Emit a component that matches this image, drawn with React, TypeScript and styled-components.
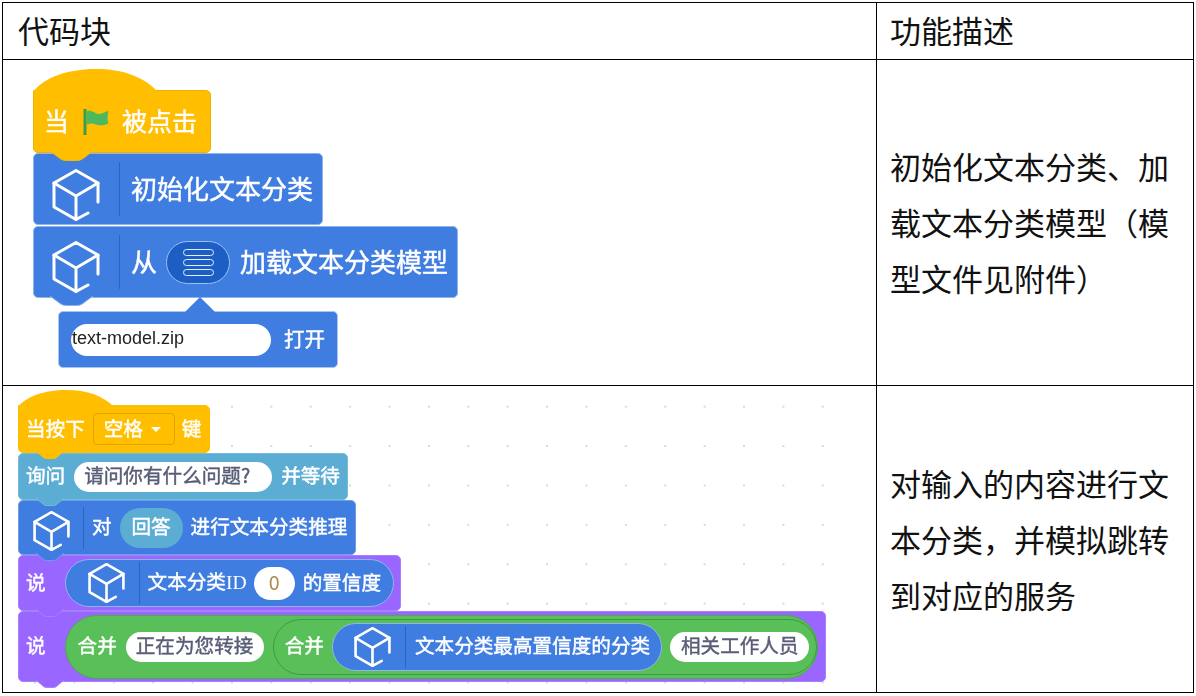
import React from 'react'
import styled, { createGlobalStyle } from 'styled-components'

const BLUE = '#3f7de0'
const TEAL = '#5cadd3'
const YELLOW = '#ffbf00'
const PURPLE = '#9966ff'
const GREEN = '#59c059'
const CJK = '"Noto Sans CJK SC", "Noto Sans", sans-serif'

const Global = createGlobalStyle`
  html, body { margin: 0; padding: 0; background: #fff; }
  body { font-family: ${CJK}; }
`

const Table = styled.div`
  margin: 2px;
  display: grid;
  grid-template-columns: 873px 316px;
  grid-template-rows: 56px 325px 306px;
  gap: 1px;
  padding: 1px;
  box-sizing: border-box;
  width: 1192px;
  height: 691px;
  background: #000;
`

const HeadCell = styled.div`
  background: #fff;
  display: flex;
  align-items: center;
  padding: 0 0 4px ${p => p.$pl || 13}px;
  font-size: 31px;
  color: #111;
`

const TextCell = styled.div`
  background: #fff;
  display: flex;
  align-items: center;
  padding: 0 18px 1px 13px;
  font-size: 31px;
  line-height: 56px;
  color: #111;
`

const CodeCell = styled.div`
  background: #fff;
  overflow: hidden;
`

const Stack = styled.div`
  display: flex;
  flex-direction: column;
  align-items: flex-start;
  padding: 30px 0 0 30px;
  filter: blur(0.35px);
`

const Canvas = styled(Stack)`
  width: 823px;
  height: 100%;
  box-sizing: border-box;
  padding: 19px 0 0 15px;
  background-image: radial-gradient(circle, #d8d8d8 1px, transparent 1.5px);
  background-size: 39.4px 39.4px;
  background-position: 12.3px 1px;
`

const Block = styled.div`
  position: relative;
  display: flex;
  align-items: center;
  box-sizing: border-box;
  flex: none;
  width: ${p => p.$w}px;
  height: ${p => p.$h}px;
  margin-top: ${p => p.$mt || 0}px;
  margin-left: ${p => p.$ml || 0}px;
  padding-left: ${p => p.$pl || 0}px;
  background: ${p => p.$bg};
  border: 1px solid ${p => p.$line};
  border-radius: ${p => (p.$hat ? '0 5px 5px 5px' : '5px')};
  color: #fff;
  font-size: ${p => p.$fs || 20}px;
  white-space: nowrap;
  -webkit-text-stroke: 0.45px currentColor;
`

const BumpSvg = styled.svg`
  position: absolute;
  z-index: 2;
  top: calc(100% - 1px);
  left: ${p => p.$left}px;
`

const HumpSvg = styled.svg`
  position: absolute;
  left: -1px;
  bottom: calc(100% - 1px);
`

const PopupArrow = styled.div`
  position: absolute;
  left: 126px;
  top: -15px;
  width: 30px;
  height: 15px;
  background: ${BLUE};
  clip-path: polygon(50% 0, 100% 100%, 0 100%);
`

const Label = styled.span`
  display: block;
  flex: none;
  line-height: 1;
  padding-bottom: 3px;
  margin-left: ${p => p.$ml || 0}px;
`

const Divider = styled.i`
  display: block;
  flex: none;
  width: 1px;
  height: ${p => p.$h}px;
  margin: 0 ${p => p.$r}px 0 ${p => p.$l}px;
  background: rgba(30, 80, 170, 0.55);
`

const Pill = styled.div`
  display: flex;
  align-items: center;
  justify-content: ${p => (p.$center ? 'center' : 'flex-start')};
  flex: none;
  box-sizing: border-box;
  width: ${p => p.$w}px;
  height: ${p => p.$h}px;
  margin-left: ${p => p.$ml || 0}px;
  padding-left: ${p => p.$pl || 0}px;
  border-radius: ${p => p.$h / 2}px;
  background: ${p => p.$bg || '#fff'};
  border: ${p => (p.$line ? `1px solid ${p.$line}` : 'none')};
  color: ${p => p.$color || '#575e75'};
`

const FileName = styled(Pill)`
  font-family: "Liberation Sans", Arial, sans-serif;
  font-size: 18px;
  color: #222;
  -webkit-text-stroke: 0;
`

const Dropdown = styled.div`
  display: flex;
  align-items: center;
  flex: none;
  box-sizing: border-box;
  width: 82px;
  height: 32px;
  margin-left: 8px;
  padding-left: 10px;
  border: 1px solid #e0a400;
  border-radius: 4px;
`

const Caret = styled.i`
  display: block;
  margin-left: 8px;
  border-left: 5px solid transparent;
  border-right: 5px solid transparent;
  border-top: 5px solid #fff;
`

const SerifId = styled.span`
  font-family: "Liberation Serif", serif;
  -webkit-text-stroke: 0;
`

const ZeroPill = styled(Pill)`
  -webkit-text-stroke: 0;
`

const CubeSvg = styled.svg`
  flex: none;
  margin-top: ${p => p.$dy || 0}px;
  fill: none;
  stroke: #fff;
  stroke-linejoin: round;
  stroke-linecap: round;
`

const FlagSvg = styled.svg`
  flex: none;
  margin-left: 14px;
`

const MenuPill = styled.div`
  display: flex;
  flex-direction: column;
  align-items: center;
  justify-content: center;
  gap: 3px;
  flex: none;
  box-sizing: border-box;
  width: 64px;
  height: 43px;
  margin-left: 9px;
  border-radius: 22px;
  background: #1d5ec4;
  border: 1px solid #9dc0f0;
`

const MenuBar = styled.i`
  display: block;
  width: 31px;
  height: 7px;
  box-sizing: border-box;
  border: 1.6px solid #e4eefc;
  border-radius: 3.5px;
`

const Bump = ({ w, h, left, bg, line }: { w: number; h: number; left: number; bg: string; line: string }) => {
  const edge = `M0 0 L${w * 0.25} ${h - 2} Q${w * 0.3} ${h - 0.5} ${w * 0.38} ${h - 0.5} L${w * 0.62} ${h - 0.5} Q${w * 0.7} ${h - 0.5} ${w * 0.75} ${h - 2} L${w} 0`
  return (
    <BumpSvg $left={left} width={w} height={h} viewBox={`0 0 ${w} ${h}`}>
      <path d={`${edge} Z`} fill={bg} />
      <path d={edge} fill="none" stroke={line} />
    </BumpSvg>
  )
}

const Hump = ({ w, h, bg }: { w: number; h: number; bg: string }) => (
  <HumpSvg width={w} height={h} viewBox="0 0 124 23" preserveAspectRatio="none">
    <path d="M0 23 C10 9 34 0 62 0 C90 0 110 8 124 23 Z" fill={bg} />
  </HumpSvg>
)

const Cube = ({ w, h, dy, sw }: { w: number; h: number; dy?: number; sw: number }) => (
  <CubeSvg $dy={dy} width={w} height={h} viewBox="0 0 48 52" strokeWidth={sw}>
    <path d="M36 44 L24 50.5 L2 38 L2 14 L24 1.5 L46 14 L46 33" />
    <path d="M2 14 L24 27 L46 14 M24 27 L24 50.5" />
  </CubeSvg>
)

const Flag = () => (
  <FlagSvg width={26} height={28} viewBox="0 0 26 28">
    <path d="M0.5 1 L3.5 1 L3.5 27 L0.5 27 Z" fill="#3f9b47" />
    <path d="M3.5 3 C8 0.5 13 7 17 6 C20 5.4 23 3.5 25.5 3 C24.5 7 24 11 25.5 15.5 C21 17.5 17 18 13 16.5 C9 15 6 15.5 3.5 17 Z" fill="#4cb95e" />
  </FlagSvg>
)

const App = () => {
  return (
    <>
      <Global />
      <Table>
        <HeadCell $pl={15}>代码块</HeadCell>
        <HeadCell>功能描述</HeadCell>

        <CodeCell>
          <Stack>
            <Block $hat $w={178} $h={63} $pl={10} $fs={25} $bg={YELLOW} $line="#f0b000">
              <Hump w={125} h={23} bg={YELLOW} />
              <Label>当</Label>
              <Flag />
              <Label $ml={13}>被点击</Label>
              <Bump w={43} h={10} left={16} bg={YELLOW} line="#f5b800" />
            </Block>
            <Block $w={290} $h={72} $pl={18} $fs={26} $bg={BLUE} $line="#8fb4ec">
              <Cube w={48} h={52} dy={11} sw={3} />
              <Divider $h={54} $l={19} $r={11} />
              <Label>初始化文本分类</Label>
            </Block>
            <Block $w={425} $h={72} $mt={1} $pl={18} $fs={26} $bg={BLUE} $line="#8fb4ec">
              <Cube w={48} h={52} dy={10} sw={3} />
              <Divider $h={54} $l={19} $r={11} />
              <Label>从</Label>
              <MenuPill>
                <MenuBar />
                <MenuBar />
                <MenuBar />
              </MenuPill>
              <Label $ml={10}>加载文本分类模型</Label>
              <Bump w={43} h={10} left={16} bg={BLUE} line="#8fb4ec" />
            </Block>
            <Block $w={280} $h={57} $mt={13} $ml={25} $pl={12} $fs={20.5} $bg={BLUE} $line="#a8c6f0">
              <PopupArrow />
              <FileName $w={200} $h={32} $pl={1}><Label>text-model.zip</Label></FileName>
              <Label $ml={13}>打开</Label>
            </Block>
          </Stack>
        </CodeCell>
        <TextCell>初始化文本分类、加载文本分类模型（模型文件见附件）</TextCell>

        <CodeCell>
          <Canvas>
            <Block $hat $w={192} $h={48} $pl={7} $fs={19.6} $bg={YELLOW} $line={YELLOW}>
              <Hump w={96} h={17} bg={YELLOW} />
              <Label>当按下</Label>
              <Dropdown>
                <Label>空格</Label>
                <Caret />
              </Dropdown>
              <Label $ml={7}>键</Label>
              <Bump w={28} h={8} left={17} bg={YELLOW} line={YELLOW} />
            </Block>
            <Block $w={330} $h={47} $pl={7} $fs={19.6} $bg={TEAL} $line="#74bcdc">
              <Label>询问</Label>
              <Pill $w={198} $h={30} $ml={9} $pl={10}><Label>请问你有什么问题?</Label></Pill>
              <Label $ml={9}>并等待</Label>
              <Bump w={28} h={8} left={17} bg={TEAL} line="#74bcdc" />
            </Block>
            <Block $w={338} $h={55} $pl={14} $fs={19.6} $bg={BLUE} $line="#6e9de8">
              <Cube w={37} h={40} dy={6} sw={3.4} />
              <Divider $h={42} $l={13} $r={8} />
              <Label>对</Label>
              <Pill $w={63} $h={40} $ml={8} $bg={TEAL} $color="#fff" $center><Label>回答</Label></Pill>
              <Label $ml={8}>进行文本分类推理</Label>
              <Bump w={28} h={8} left={17} bg={BLUE} line="#6e9de8" />
            </Block>
            <Block $w={383} $h={56} $pl={7} $fs={19.6} $bg={PURPLE} $line="#a880ff">
              <Label>说</Label>
              <Pill $w={329} $h={48} $ml={19} $pl={22} $bg={BLUE} $color="#fff" $line="#8fb4ec">
                <Cube w={37} h={40} sw={3.4} />
                <Divider $h={42} $l={14} $r={8} />
                <Label>文本分类<SerifId>ID</SerifId></Label>
                <ZeroPill $w={41} $h={33} $ml={7} $center $color="#b08a50"><Label>0</Label></ZeroPill>
                <Label $ml={8}>的置信度</Label>
              </Pill>
              <Bump w={28} h={8} left={17} bg={PURPLE} line="#a880ff" />
            </Block>
            <Block $w={808} $h={71} $pl={7} $fs={19.6} $bg={PURPLE} $line="#a880ff">
              <Label>说</Label>
              <Pill $w={753} $h={64} $ml={19} $pl={12} $bg={GREEN} $color="#fff" $line="#4dab4d">
                <Label>合并</Label>
                <Pill $w={138} $h={30} $ml={9} $pl={10}><Label>正在为您转接</Label></Pill>
                <Pill $w={544} $h={56} $ml={9} $pl={11} $bg={GREEN} $color="#fff" $line="#3f9a3f">
                  <Label>合并</Label>
                  <Pill $w={330} $h={48} $ml={8} $pl={21} $bg={BLUE} $color="#fff" $line="#8fb4ec">
                    <Cube w={37} h={40} sw={3.4} />
                    <Divider $h={42} $l={14} $r={9} />
                    <Label>文本分类最高置信度的分类</Label>
                  </Pill>
                  <Pill $w={139} $h={30} $ml={8} $pl={11}><Label>相关工作人员</Label></Pill>
                </Pill>
              </Pill>
              <Bump w={28} h={8} left={17} bg={PURPLE} line="#a880ff" />
            </Block>
          </Canvas>
        </CodeCell>
        <TextCell>对输入的内容进行文本分类，并模拟跳转到对应的服务</TextCell>
      </Table>
    </>
  )
}

export default App
